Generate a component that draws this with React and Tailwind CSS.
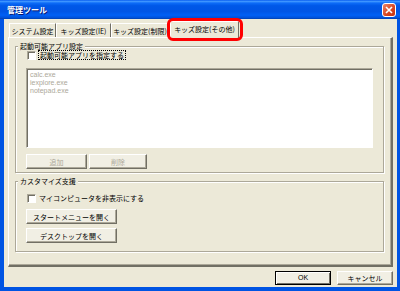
import clsx from 'clsx'

const tabs = [
  { name: 'システム設定', w: 'w-[47px]' },
  { name: 'キッズ設定(IE)', w: 'w-[55px]' },
  { name: 'キッズ設定(制限)', w: 'w-[58px]' }
]

function Button({ children, className, disabled, isDefault }) {
  return (
    <div
      className={clsx(
        'flex items-center justify-center bg-[#f1efe4] leading-[8px]',
        isDefault
          ? 'border border-black shadow-[inset_1px_1px_0_#fff,inset_-1px_-1px_0_#716f64]'
          : 'border border-t-white border-l-white border-r-[#716f64] border-b-[#716f64] shadow-[inset_-1px_-1px_0_#aca899]',
        disabled ? 'text-[#aca899]' : 'text-black',
        className
      )}
    >
      {children}
    </div>
  )
}

function Checkbox() {
  return (
    <div className="w-[9px] h-[9px] shrink-0 bg-white border border-t-[#aca899] border-l-[#aca899] border-r-white border-b-white shadow-[inset_1px_1px_0_#716f64]" />
  )
}

function Group({ title, className, children }) {
  return (
    <fieldset
      className={clsx(
        'border border-[#aca899] shadow-[inset_1px_1px_0_#fff,1px_1px_0_#fff] px-[10px]',
        className
      )}
    >
      <legend className="-ml-[8px] px-[2px] h-[8px] leading-[8px] bg-[#ece9d8] text-black">{title}</legend>
      {children}
    </fieldset>
  )
}

export default function App() {
  return (
    <div className="relative w-[400px] h-[291px] flex flex-col bg-[#0054e3] font-['Noto_Sans_CJK_JP','Noto_Sans_CJK_SC',sans-serif] text-[7px] overflow-hidden">
      {/* Title bar */}
      <div className="h-[19px] flex items-center justify-between pl-[7px] pr-[4px] bg-[linear-gradient(#0a5ef0_0%,#3d95ff_8%,#0d6cf8_16%,#0058e8_30%,#0055e5_60%,#0060f5_80%,#0052dc_92%,#0040b0_100%)]">
        <span className="text-[8px] font-bold text-white leading-[10px] [text-shadow:1px_1px_0_#0a1a70]">管理ツール</span>
        <div className="w-[14px] h-[14px] rounded-[3px] border border-white bg-[linear-gradient(135deg,#e8866a,#d8441e_60%,#c23212)] flex items-center justify-center">
          <svg width="8" height="8" viewBox="0 0 8 8">
            <path d="M1 1 L7 7 M7 1 L1 7" stroke="#fff" strokeWidth="1.6" />
          </svg>
        </div>
      </div>

      {/* Body */}
      <div className="flex-1 flex flex-col ml-[4px] mr-[3px] mb-[4px] bg-[#ece9d8] pt-[2px]">
        {/* Tabs */}
        <div className="h-[16px] flex items-end pl-[5px] relative z-10">
          {tabs.map((t) => (
            <div
              key={t.name}
              className={clsx(
                'h-[14px] flex items-center justify-center border-t border-l border-t-white border-l-white border-r border-r-[#716f64] text-black leading-[8px]',
                t.w
              )}
            >
              {t.name}
            </div>
          ))}
          <div className="w-[69px] h-[17px] -mb-[1px] ml-[1px] flex items-center justify-center bg-[#ece9d8] border-t border-l border-t-white border-l-white border-r border-r-[#716f64] text-black leading-[8px] pb-[2px]">
            キッズ設定(その他)
          </div>
        </div>

        {/* Tab panel */}
        <div className="flex-1 ml-[4px] mr-[4px] flex flex-col pt-[4px] pl-[6px] pr-[7px] border-t border-l border-t-white border-l-white border-r-2 border-b-2 border-r-[#716f64] border-b-[#716f64] shadow-[inset_-1px_-1px_0_#aca899]">
          <Group title="起動可能アプリ設定" className="pb-[3px]">
            <div className="h-[10px] flex items-center gap-[2px] pl-[1px]">
              <Checkbox />
              <span className="h-[10px] flex items-center leading-[8px] px-[1px] border border-dotted border-black text-black">起動可能アプリを指定する</span>
            </div>
            <div className="mt-[8px] h-[80px] bg-white border border-t-[#aca899] border-l-[#aca899] border-r-white border-b-white shadow-[inset_1px_1px_0_#716f64] pl-[3px] pt-[2px] flex flex-col text-[#aca899] leading-[8px] font-['Liberation_Sans',sans-serif]">
              <span>calc.exe</span>
              <span>iexplore.exe</span>
              <span>notepad.exe</span>
            </div>
            <div className="mt-[6px] flex gap-[2px]">
              <Button disabled className="w-[61px] h-[15px]">追加</Button>
              <Button disabled className="w-[58px] h-[15px]">削除</Button>
            </div>
          </Group>

          <Group title="カスタマイズ支援" className="mt-[4px] pb-[8px]">
            <div className="mt-[8px] h-[10px] flex items-center gap-[3px] pl-[1px]">
              <Checkbox />
              <span className="leading-[8px] text-black">マイコンピュータを非表示にする</span>
            </div>
            <Button className="mt-[6px] w-[91px] h-[15px]">スタートメニューを開く</Button>
            <Button className="mt-[4px] w-[91px] h-[15px]">デスクトップを開く</Button>
          </Group>
        </div>

        {/* Footer buttons */}
        <div className="flex justify-end gap-[6px] pt-[4px] pb-[2px] pr-[4px]">
          <Button isDefault className="w-[56px] h-[14px] font-['Liberation_Sans',sans-serif]">OK</Button>
          <Button className="w-[56px] h-[14px]">キャンセル</Button>
        </div>
      </div>

      {/* Red highlight around selected tab */}
      <div className="absolute left-[167px] top-[18px] w-[76px] h-[23px] border-[3px] border-[#ff0000] rounded-[6px] z-20" />
    </div>
  )
}
